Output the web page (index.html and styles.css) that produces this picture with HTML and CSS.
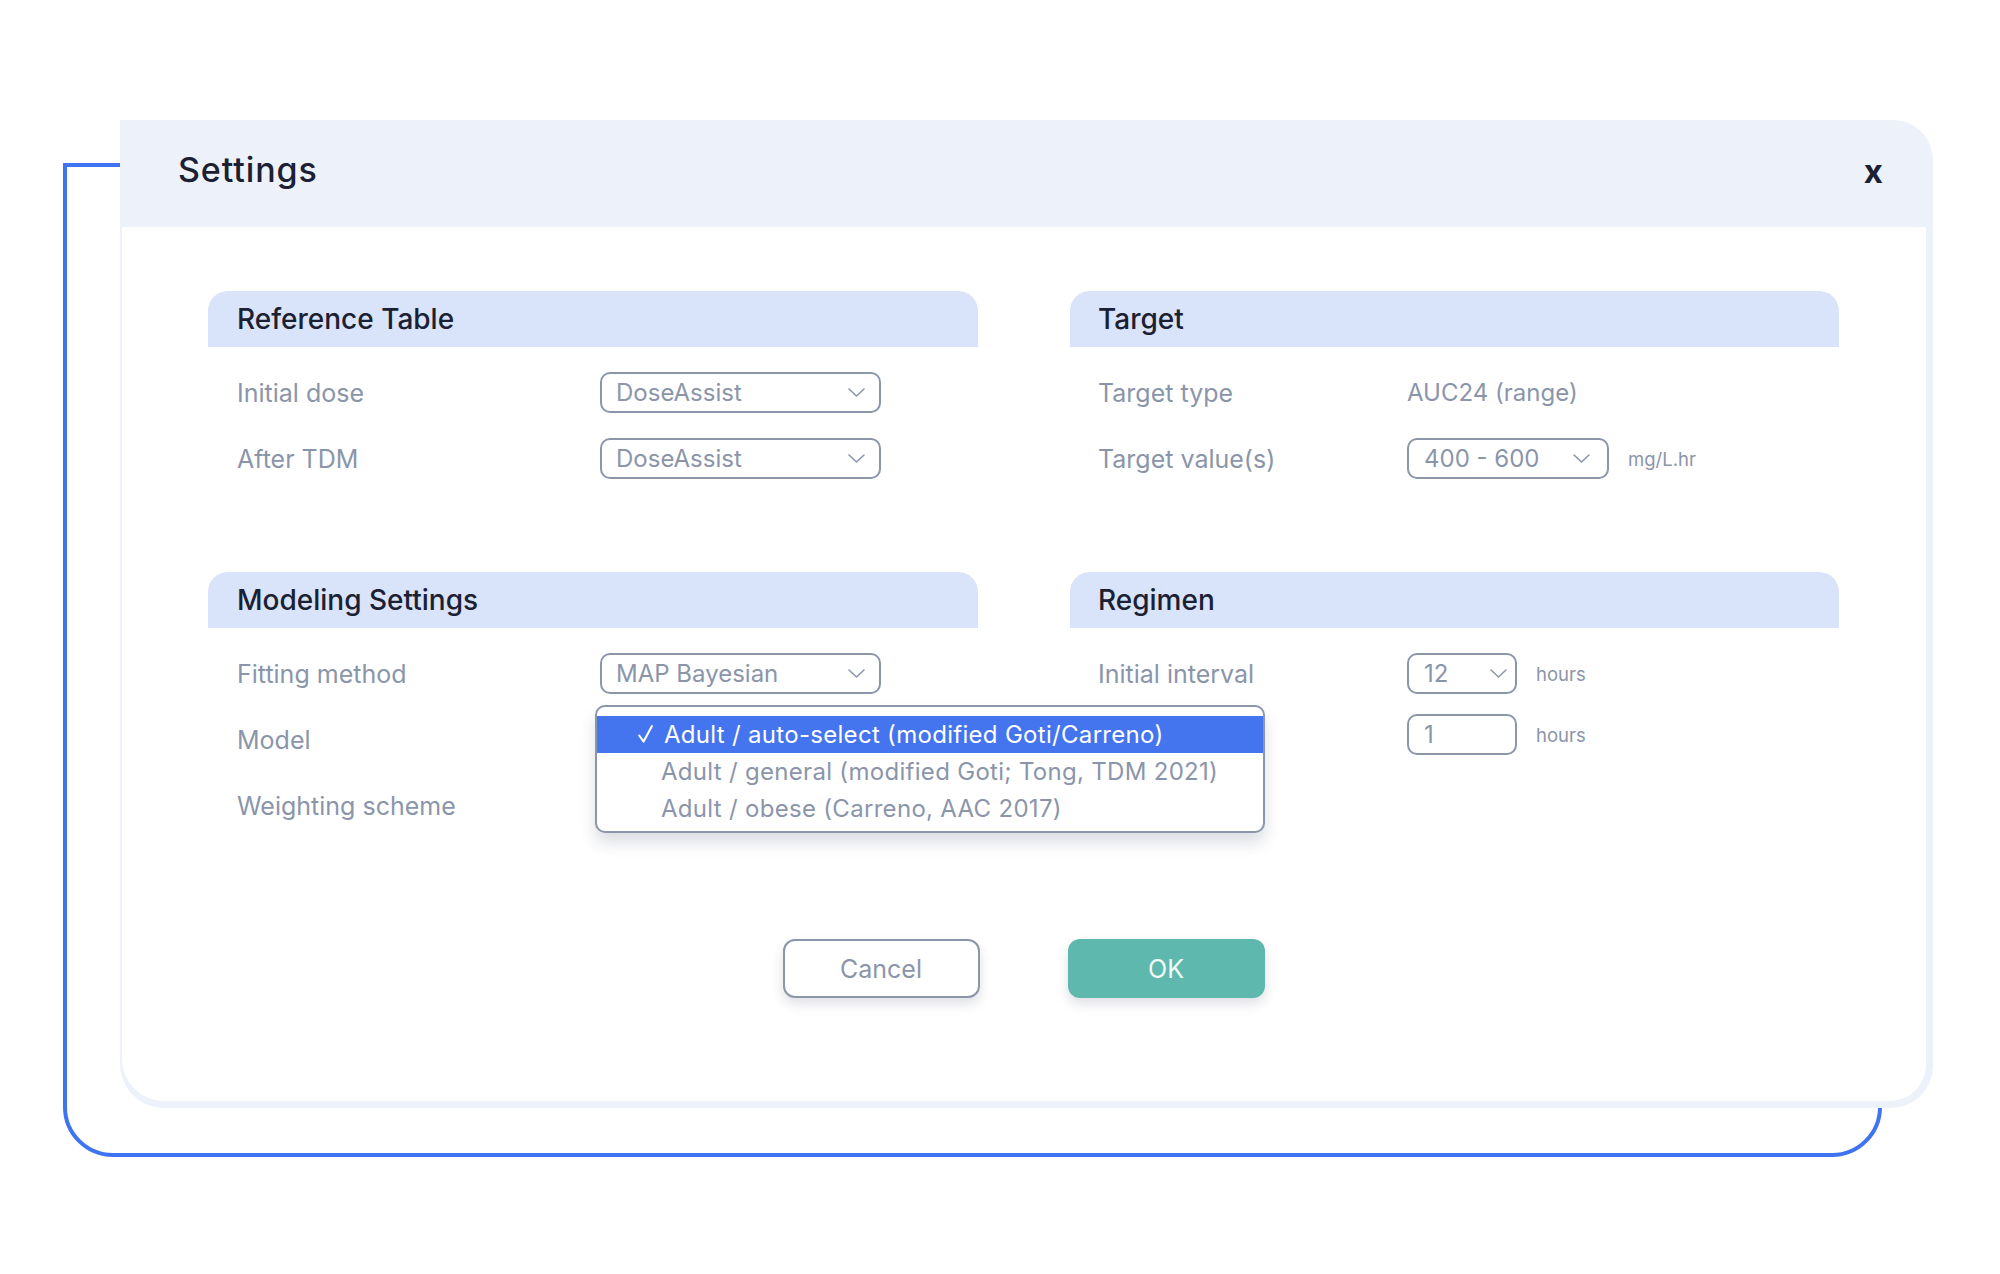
FILE: index.html
```html
<!DOCTYPE html>
<html lang="en">
<head>
<meta charset="utf-8">
<title>Settings</title>
<link rel="stylesheet" href="styles.css">
</head>
<body>
<div class="stage">
  <div class="frame"></div>
  <div class="dialog">
    <div class="dialog-head">
      <h1 class="title">Settings</h1>
      <span class="close">x</span>
    </div>
    <div class="dialog-body">
      <div class="sections">
        <section class="card card-left">
          <h2 class="card-title">Reference Table</h2>
          <div class="rows">
            <div class="row">
              <span class="label">Initial dose</span>
              <div class="select select-wide"><span>DoseAssist</span><svg class="chev" width="17" height="9" viewBox="0 0 17 9"><path d="M1 1 L8.5 8 L16 1"/></svg></div>
            </div>
            <div class="row">
              <span class="label">After TDM</span>
              <div class="select select-wide"><span>DoseAssist</span><svg class="chev" width="17" height="9" viewBox="0 0 17 9"><path d="M1 1 L8.5 8 L16 1"/></svg></div>
            </div>
          </div>
        </section>
        <section class="card card-right">
          <h2 class="card-title">Target</h2>
          <div class="rows">
            <div class="row">
              <span class="label">Target type</span>
              <span class="value">AUC24 (range)</span>
            </div>
            <div class="row">
              <span class="label">Target value(s)</span>
              <div class="select select-mid"><span>400 - 600</span><svg class="chev" width="17" height="9" viewBox="0 0 17 9"><path d="M1 1 L8.5 8 L16 1"/></svg></div>
              <span class="unit">mg/L.hr</span>
            </div>
          </div>
        </section>
        <section class="card card-left">
          <h2 class="card-title">Modeling Settings</h2>
          <div class="rows">
            <div class="row">
              <span class="label">Fitting method</span>
              <div class="select select-wide"><span>MAP Bayesian</span><svg class="chev" width="17" height="9" viewBox="0 0 17 9"><path d="M1 1 L8.5 8 L16 1"/></svg></div>
            </div>
            <div class="row">
              <span class="label">Model</span>
              <div class="slot">
                <div class="listbox">
                  <div class="option selected"><svg class="check" width="15" height="18" viewBox="0 0 15 18"><path d="M1.2 10.5 L5.6 16.6 L13.8 1.2"/></svg>Adult / auto-select (modified Goti/Carreno)</div>
                  <div class="option">Adult / general (modified Goti; Tong, TDM 2021)</div>
                  <div class="option">Adult / obese (Carreno, AAC 2017)</div>
                </div>
              </div>
            </div>
            <div class="row">
              <span class="label">Weighting scheme</span>
              <div class="slot"></div>
            </div>
          </div>
        </section>
        <section class="card card-right">
          <h2 class="card-title">Regimen</h2>
          <div class="rows rows-tight">
            <div class="row">
              <span class="label">Initial interval</span>
              <div class="select select-small"><span>12</span><svg class="chev" width="17" height="9" viewBox="0 0 17 9"><path d="M1 1 L8.5 8 L16 1"/></svg></div>
              <span class="unit">hours</span>
            </div>
            <div class="row">
              <span class="label"></span>
              <div class="select input-small"><span>1</span></div>
              <span class="unit">hours</span>
            </div>
          </div>
        </section>
      </div>
      <div class="actions">
        <button class="btn btn-cancel" type="button">Cancel</button>
        <button class="btn btn-ok" type="button">OK</button>
      </div>
    </div>
  </div>
</div>
</body>
</html>
```

FILE: styles.css
```css
html, body {
  margin: 0;
  padding: 0;
  background: #ffffff;
}

body {
  font-family: Inter, "Noto Sans", "DejaVu Sans", sans-serif;
}

.stage {
  position: relative;
  width: 2000px;
  height: 1274px;
  box-sizing: border-box;
  padding: 120px 0 0 120px;
  overflow: hidden;
}

.frame {
  position: absolute;
  left: 63px;
  top: 163px;
  width: 1819px;
  height: 994px;
  box-sizing: border-box;
  border: 4px solid #3e74f1;
  border-radius: 0 0 50px 50px;
}

.dialog {
  position: relative;
  z-index: 1;
  width: 1813px;
  height: 988px;
  background: #edf1f9;
  border-radius: 0 40px 42px 44px;
  display: flex;
  flex-direction: column;
}

.dialog-head {
  flex: none;
  height: 107px;
  box-sizing: border-box;
  padding: 0 50px 8px 58px;
  display: flex;
  align-items: center;
  justify-content: space-between;
}

.title {
  margin: 0;
  font-size: 34px;
  font-weight: 500;
  letter-spacing: 0.9px;
  color: #1b2033;
}

.close {
  font-size: 33px;
  font-weight: 700;
  color: #1b2033;
  line-height: 1;
  margin-top: 4px;
}

.dialog-body {
  flex: 1;
  margin: 0 7px 7px 2px;
  background: #ffffff;
  border-radius: 0 0 36px 42px;
  padding: 64px 87px 0 86px;
}

.sections {
  display: grid;
  grid-template-columns: 770px 769px;
  column-gap: 92px;
  row-gap: 93px;
}

.card-title {
  margin: 0;
  height: 56px;
  box-sizing: border-box;
  display: flex;
  align-items: center;
  background: #d9e3f9;
  border-radius: 20px 20px 0 0;
  padding-left: 29px;
  font-size: 28px;
  font-weight: 500;
  color: #1b2033;
}

.card-right .card-title {
  padding-left: 28px;
}

.rows {
  padding-top: 25px;
  display: flex;
  flex-direction: column;
  gap: 25px;
}

.rows-tight {
  gap: 20px;
}

.card-left .rows {
  padding-left: 29px;
}

.card-right .rows {
  padding-left: 28px;
}

.row {
  height: 41px;
  display: flex;
  align-items: center;
}

.label {
  flex: none;
  font-size: 25px;
  color: #8b95aa;
}

.card-left .label {
  width: 363px;
}

.card-right .label {
  width: 309px;
}

.value {
  font-size: 24px;
  color: #8b95aa;
}

.select {
  box-sizing: border-box;
  height: 41px;
  border: 2px solid #8c96ab;
  border-radius: 10px;
  display: flex;
  align-items: center;
  justify-content: space-between;
  padding: 0 14px;
  font-size: 24px;
  color: #8b95aa;
  flex: none;
}

.chev {
  flex: none;
}

.chev path {
  fill: none;
  stroke: #8c96ab;
  stroke-width: 1.6;
  stroke-linecap: round;
  stroke-linejoin: round;
}

.select-wide {
  width: 281px;
}

.select-mid {
  width: 202px;
  padding: 0 17px 0 15px;
}

.select-small {
  width: 110px;
  padding: 0 8px 0 15px;
}

.input-small {
  width: 110px;
  padding: 0 8px 0 15px;
}

.unit {
  margin-left: 19px;
  font-size: 18.5px;
  color: #8b95aa;
}

.slot {
  position: relative;
  width: 281px;
  height: 41px;
}

.listbox {
  position: absolute;
  z-index: 2;
  left: -5px;
  top: -14px;
  width: 670px;
  box-sizing: border-box;
  border: 2px solid #8c96ab;
  border-radius: 10px;
  background: #ffffff;
  padding: 9px 0 4px;
  box-shadow: 0 10px 16px rgba(40, 50, 80, 0.16);
}

.option {
  height: 37px;
  line-height: 37px;
  font-size: 24px;
  letter-spacing: 0.3px;
  color: #8b95aa;
  padding-left: 64px;
  white-space: nowrap;
}

.option.selected {
  display: flex;
  align-items: center;
  background: #4474ee;
  color: #ffffff;
  padding-left: 41px;
}

.check {
  flex: none;
  margin-right: 11px;
  margin-top: -2px;
}

.check path {
  fill: none;
  stroke: #ffffff;
  stroke-width: 2.1;
  stroke-linecap: round;
  stroke-linejoin: round;
}

.actions {
  display: flex;
  justify-content: center;
  gap: 88px;
  margin-top: 113px;
}

.btn {
  box-sizing: border-box;
  width: 197px;
  height: 59px;
  border-radius: 12px;
  font-family: inherit;
  font-size: 25px;
  display: flex;
  align-items: center;
  justify-content: center;
  box-shadow: 0 6px 12px rgba(40, 50, 80, 0.15);
  cursor: pointer;
}

.btn-cancel {
  background: #ffffff;
  border: 2px solid #8c96ab;
  color: #8b95aa;
}

.btn-ok {
  background: #5fb8ae;
  border: none;
  color: #f2faf8;
}
```
